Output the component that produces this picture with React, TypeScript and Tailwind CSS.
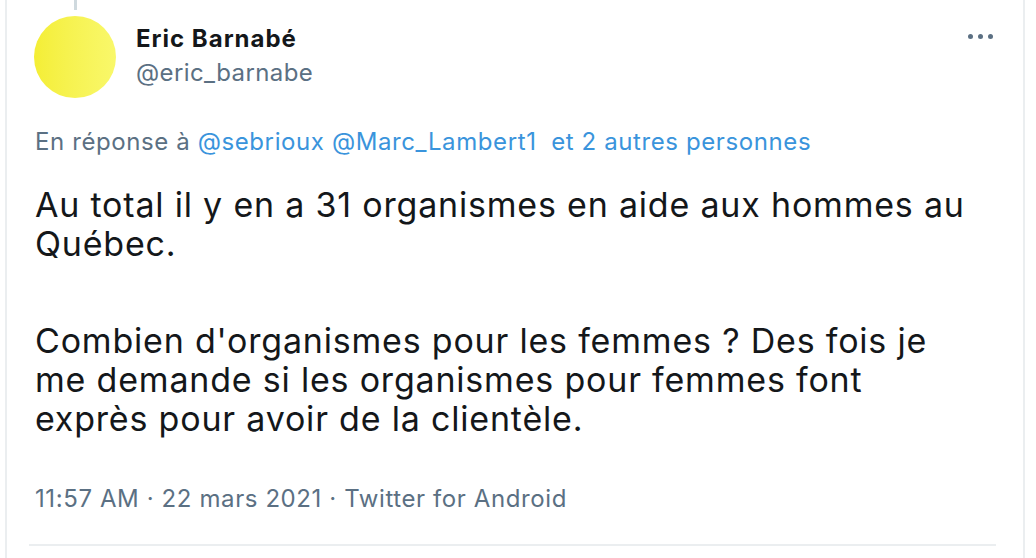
import React from 'react'

const font = { fontFamily: 'Inter, "Liberation Sans", sans-serif' }

const App: React.FC = () => {
  return (
    <div className="w-[1036px] h-[558px] bg-white overflow-hidden" style={font}>
      <div className="ml-[5px] w-[1020px] h-full border-x-2 border-[#ebeef0] pl-[28px] pr-[27px]">
        {/* header */}
        <div className="flex items-start">
          <div className="flex flex-col items-center -ml-[1px]">
            <div className="w-[3px] h-[10px] bg-[#cfd9de]" />
            <div className="mt-[6px] w-[82px] h-[82px] rounded-full bg-gradient-to-r from-[#f4ee35] to-[#f9f86a]" />
          </div>
          <div className="ml-[20px] pt-[25px] flex flex-col">
            <span className="text-[24px] leading-[28px] tracking-[1px] font-bold text-[#14171a]">Eric Barnabé</span>
            <span className="mt-[6px] text-[24px] leading-[28px] tracking-[0.4px] text-[#5b7083]">@eric_barnabe</span>
          </div>
          <div className="ml-auto mr-[3px] mt-[34px] flex gap-[5px]">
            <span className="w-[5px] h-[5px] rounded-full bg-[#5b7083]" />
            <span className="w-[5px] h-[5px] rounded-full bg-[#5b7083]" />
            <span className="w-[5px] h-[5px] rounded-full bg-[#5b7083]" />
          </div>
        </div>

        {/* reply line */}
        <div className="mt-[30px] text-[24px] leading-[28px] tracking-[0.6px] text-[#5b7083] whitespace-pre">
          En réponse à <span className="text-[#3a94dc]">@sebrioux</span>{' '}
          <span className="text-[#3a94dc]">@Marc_Lambert1</span>{'  '}
          <span className="text-[#3a94dc]">et 2 autres personnes</span>
        </div>

        {/* tweet body */}
        <div className="mt-[29px] text-[34px] leading-[39px] tracking-[0.8px] text-[#14171a] whitespace-nowrap">
          <p>
            Au total il y en a 31 organismes en aide aux hommes au
            <br />
            Québec.
          </p>
          <p className="mt-[58px]">
            Combien d'organismes pour les femmes ? Des fois je
            <br />
            me demande si les organismes pour femmes font
            <br />
            exprès pour avoir de la clientèle.
          </p>
        </div>

        {/* meta */}
        <div className="mt-[47px] text-[24px] leading-[28px] tracking-[0.6px] text-[#5b7083]">
          11:57 AM · 22 mars 2021 · Twitter for Android
        </div>

        <div className="mt-[31px] -ml-[6px] h-[2px] bg-[#ebeef0]" />
      </div>
    </div>
  )
}

export default App
